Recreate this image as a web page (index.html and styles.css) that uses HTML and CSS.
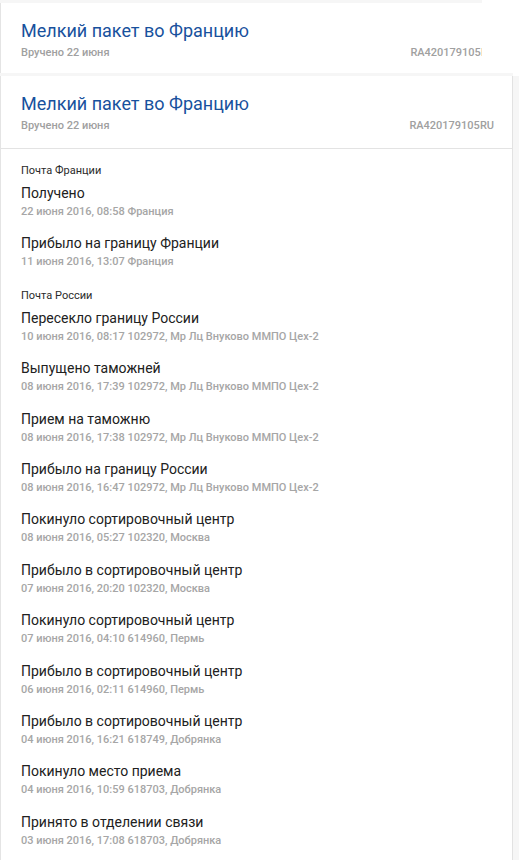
FILE: index.html
```html
<!DOCTYPE html>
<html lang="ru">
<head>
<meta charset="utf-8">
<title>Отслеживание</title>
<link rel="stylesheet" href="styles.css">
</head>
<body>
<div class="feed">
  <div class="strip strip-top"></div>
  <div class="card card-collapsed">
    <div class="card-head">
      <div class="title">Мелкий пакет во Францию</div>
      <div class="meta"><span>Вручено 22 июня</span><span>RA420179105RU</span></div>
    </div>
  </div>
  <div class="strip strip-mid"></div>
  <div class="row">
    <div class="card card-open">
      <div class="card-head">
        <div class="title">Мелкий пакет во Францию</div>
        <div class="meta"><span>Вручено 22 июня</span><span>RA420179105RU</span></div>
      </div>
      <div class="events">
        <div class="group">
          <div class="group-label">Почта Франции</div>
          <div class="event"><div class="ev-title">Получено</div><div class="ev-sub">22 июня 2016, 08:58 Франция</div></div>
          <div class="event"><div class="ev-title">Прибыло на границу Франции</div><div class="ev-sub">11 июня 2016, 13:07 Франция</div></div>
        </div>
        <div class="group">
          <div class="group-label">Почта России</div>
          <div class="event"><div class="ev-title">Пересекло границу России</div><div class="ev-sub">10 июня 2016, 08:17 102972, Мр Лц Внуково ММПО Цех-2</div></div>
          <div class="event"><div class="ev-title">Выпущено таможней</div><div class="ev-sub">08 июня 2016, 17:39 102972, Мр Лц Внуково ММПО Цех-2</div></div>
          <div class="event"><div class="ev-title">Прием на таможню</div><div class="ev-sub">08 июня 2016, 17:38 102972, Мр Лц Внуково ММПО Цех-2</div></div>
          <div class="event"><div class="ev-title">Прибыло на границу России</div><div class="ev-sub">08 июня 2016, 16:47 102972, Мр Лц Внуково ММПО Цех-2</div></div>
          <div class="event"><div class="ev-title">Покинуло сортировочный центр</div><div class="ev-sub">08 июня 2016, 05:27 102320, Москва</div></div>
          <div class="event"><div class="ev-title">Прибыло в сортировочный центр</div><div class="ev-sub">07 июня 2016, 20:20 102320, Москва</div></div>
          <div class="event"><div class="ev-title">Покинуло сортировочный центр</div><div class="ev-sub">07 июня 2016, 04:10 614960, Пермь</div></div>
          <div class="event"><div class="ev-title">Прибыло в сортировочный центр</div><div class="ev-sub">06 июня 2016, 02:11 614960, Пермь</div></div>
          <div class="event"><div class="ev-title">Прибыло в сортировочный центр</div><div class="ev-sub">04 июня 2016, 16:21 618749, Добрянка</div></div>
          <div class="event"><div class="ev-title">Покинуло место приема</div><div class="ev-sub">04 июня 2016, 10:59 618703, Добрянка</div></div>
          <div class="event"><div class="ev-title">Принято в отделении связи</div><div class="ev-sub">03 июня 2016, 17:08 618703, Добрянка</div></div>
        </div>
      </div>
    </div>
    <div class="filler"></div>
  </div>
</div>
</body>
</html>
```
FILE: styles.css
```css
html, body {
  margin: 0;
  padding: 0;
  background: #ffffff;
  font-family: Roboto, "Noto Sans", Arial, sans-serif;
}

.feed {
  display: flex;
  flex-direction: column;
  height: 860px;
  overflow: hidden;
}

.strip {
  background: #f6f6f6;
  flex: none;
}
.strip-top { height: 3px; width: 482px; }
.strip-mid { height: 3px; width: 513px; }

.card {
  background: #ffffff;
  border-left: 1px solid #e4e4e4;
  box-sizing: border-box;
  flex: none;
}

.card-collapsed {
  width: 482px;
  height: 70px;
  overflow: hidden;
}
.card-collapsed .card-head { width: 512px; }

.row {
  display: flex;
  flex: 1;
}
.card-open {
  width: 513px;
  border-right: 1px solid #e2e2e2;
}
.filler {
  flex: 1;
  background: #f6f6f6;
}

.card-head {
  box-sizing: border-box;
  padding: 17px 18px 14px 20px;
}
.card-open .card-head {
  border-bottom: 1px solid #e3e3e3;
}

.title {
  font-size: 18px;
  line-height: 22px;
  color: #18519d;
}

.meta {
  display: flex;
  justify-content: space-between;
  margin-top: 3px;
  font-size: 11px;
  line-height: 16px;
  font-weight: 500;
  color: #a0a0a0;
}

.events {
  padding: 14px 20px 0 20px;
}

.group + .group { margin-top: 4px; }

.group-label {
  font-size: 11px;
  line-height: 16px;
  color: #2a2a2a;
  margin-bottom: 4px;
}

.event {
  padding-bottom: 13.4px;
}

.ev-title {
  font-size: 14px;
  line-height: 20px;
  color: #212121;
}

.ev-sub {
  margin-top: 1px;
  font-size: 11px;
  line-height: 16px;
  font-weight: 500;
  color: #a6a6a6;
}
```
